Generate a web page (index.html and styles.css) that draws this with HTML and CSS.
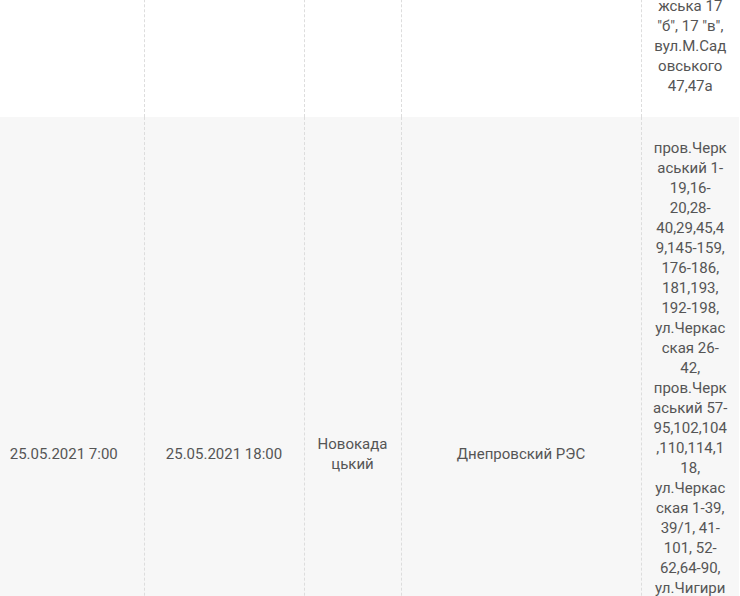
FILE: index.html
```html
<!DOCTYPE html>
<html lang="uk">
<head>
    <meta charset="UTF-8">
    <meta name="viewport" content="width=device-width, initial-scale=1.0">
    <title>Графік відключень</title>
    <link rel="stylesheet" href="styles.css">
</head>
<body>
    <table class="outage-table">
        <colgroup>
            <col class="col-start">
            <col class="col-end">
            <col class="col-town">
            <col class="col-res">
            <col class="col-addr">
        </colgroup>
        <tbody>
            <tr>
                <td>25.05.2021 8:00</td>
                <td>25.05.2021 17:00</td>
                <td>Днепр</td>
                <td>Днепровский РЭС</td>
                <td>ул.Лоцманская 2-8, ул.Бородинская 1-15, пров.Бородинский 2-30, ул.Сечеславская 4-12, ул.Запорожська 17 "б", 17 "в", вул.М.Садовського 47,47а</td>
            </tr>
            <tr class="row-alt">
                <td>25.05.2021 7:00</td>
                <td>25.05.2021 18:00</td>
                <td>Новокадацький</td>
                <td>Днепровский РЭС</td>
                <td>пров.Черкаський 1-19,16-20,28-40,29,45,49,145-159, 176-186, 181,193, 192-198, ул.Черкасская 26-42, пров.Черкаський 57-95,102,104,110,114,118, ул.Черкасская 1-39, 39/1, 41-101, 52-62,64-90, ул.Чигиринская 1-15, 2-30, ул.Сечеславская 4-12, 17-25, пров.Бородинский 2-14</td>
            </tr>
        </tbody>
    </table>
</body>
</html>
```

FILE: styles.css
```css
body {
    margin: 0;
    background-color: #ffffff;
    font-family: 'Roboto', 'Noto Sans', sans-serif;
    overflow: hidden;
}

.outage-table {
    border-collapse: collapse;
    table-layout: fixed;
    width: 755px;
    margin: -265px 0 0 -16px;
    font-size: 15px;
    line-height: 20px;
    color: #555555;
}

.col-start { width: 160px; }
.col-end { width: 160px; }
.col-town { width: 97px; }
.col-res { width: 240px; }
.col-addr { width: 98px; }

.outage-table td {
    padding: 21px 12px;
    text-align: center;
    vertical-align: middle;
    border-left: 1px dashed #dddddd;
    overflow-wrap: anywhere;
}

.outage-table td:first-child {
    border-left: none;
}

.outage-table td:last-child {
    padding: 21px 11px;
}

.row-alt {
    background-color: #f7f7f7;
}

.row-alt td:last-child {
    padding-bottom: 33px;
}
```
